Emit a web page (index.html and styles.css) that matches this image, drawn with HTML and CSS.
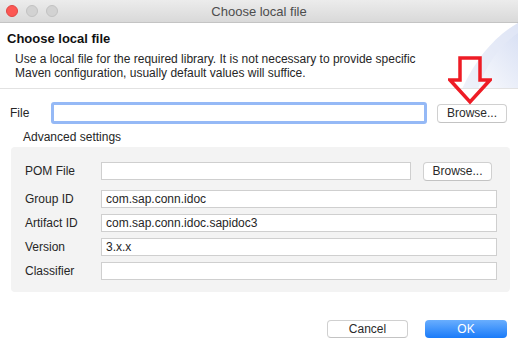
FILE: index.html
```html
<!DOCTYPE html>
<html>
<head>
<meta charset="utf-8">
<link rel="stylesheet" href="styles.css">
</head>
<body>
<div class="window">
  <div class="titlebar">
    <div class="lights">
      <span class="light red"></span>
      <span class="light"></span>
      <span class="light"></span>
    </div>
    <div class="title">Choose local file</div>
  </div>
  <div class="header">
    <svg class="deco" width="60" height="66" viewBox="0 0 60 66">
      <defs>
        <linearGradient id="g" x1="0" y1="1" x2="1" y2="0">
          <stop offset="0" stop-color="#ffffff"/>
          <stop offset="1" stop-color="#d6def3"/>
        </linearGradient>
      </defs>
      <path d="M60 0 L60 66 L4 66 C18 36 36 14 60 0 Z" fill="url(#g)"/>
      <path d="M60 10 C46 20 30 36 20 66 L4 66 C18 36 36 14 60 0 Z" fill="#e4eaf7" opacity="0.6"/>
    </svg>
    <h1 class="heading">Choose local file</h1>
    <p class="desc">Use a local file for the required library. It is not necessary to provide specific<br>Maven configuration, usually default values will suffice.</p>
  </div>
  <div class="content">
    <div class="file-row">
      <label class="file-label">File</label>
      <div class="input focus"></div>
      <button class="btn browse-main">Browse...</button>
    </div>
    <div class="adv-title">Advanced settings</div>
    <div class="group">
      <div class="row">
        <label class="lbl">POM File</label>
        <div class="input pom"></div>
        <button class="btn browse-pom">Browse...</button>
      </div>
      <div class="row">
        <label class="lbl">Group ID</label>
        <div class="input wide">com.sap.conn.idoc</div>
      </div>
      <div class="row">
        <label class="lbl">Artifact ID</label>
        <div class="input wide">com.sap.conn.idoc.sapidoc3</div>
      </div>
      <div class="row">
        <label class="lbl">Version</label>
        <div class="input wide">3.x.x</div>
      </div>
      <div class="row">
        <label class="lbl">Classifier</label>
        <div class="input wide"></div>
      </div>
    </div>
  </div>
  <div class="footer">
    <button class="btn cancel">Cancel</button>
    <button class="btn ok">OK</button>
  </div>
  <svg class="arrow" width="44" height="50" viewBox="0 0 44 50">
    <path d="M9 2 L29 2 L29 24 L39 24 L19 46 L-1 24 L9 24 Z" transform="translate(3,1)" fill="none" stroke="#ee1c25" stroke-width="3.5" stroke-linejoin="miter"/>
  </svg>
</div>
</body>
</html>
```
FILE: styles.css
```css
* { box-sizing: border-box; }
html, body { margin: 0; padding: 0; }
body {
  width: 518px;
  height: 350px;
  background: #fff;
  font-family: "Liberation Sans", Arial, sans-serif;
  font-size: 12px;
  color: #262626;
  overflow: hidden;
}
.window {
  position: relative;
  width: 518px;
  height: 350px;
}
.titlebar {
  height: 23px;
  background: linear-gradient(#ececec, #d9d9d9);
  border-bottom: 1px solid #c4c4c4;
  display: flex;
  align-items: center;
  position: relative;
}
.lights {
  display: flex;
  gap: 8px;
  padding-left: 6px;
}
.light {
  width: 12px;
  height: 12px;
  border-radius: 50%;
  background: #d2d2d2;
  border: 1px solid #c2c2c2;
}
.light.red {
  background: #fc5753;
  border-color: #df4744;
}
.title {
  flex: 1;
  text-align: center;
  font-size: 13px;
  color: #4d4d4d;
  margin-right: 58px;
}
.header {
  position: relative;
  height: 66px;
  border-bottom: 1px solid #e2e2e2;
  padding: 8px 7px 0;
  overflow: hidden;
}
.deco {
  position: absolute;
  right: 0;
  top: 0;
}
.heading {
  position: relative;
  margin: 0;
  font-size: 13px;
  font-weight: bold;
  color: #111;
}
.desc {
  position: relative;
  margin: 6px 0 0 8px;
  line-height: 14px;
  color: #262626;
}
.content {
  padding: 13px 8px 0 10px;
}
.file-row {
  display: flex;
  align-items: center;
  height: 22px;
}
.file-label {
  width: 41px;
}
.input {
  height: 18px;
  background: #fff;
  border: 1px solid #cfcfcf;
  padding: 1px 4px;
  line-height: 15px;
  color: #262626;
}
.input.focus {
  width: 376px;
  height: 22px;
  border: 3px solid #95b9f6;
  border-radius: 3px;
}
.btn {
  font-family: "Liberation Sans", Arial, sans-serif;
  font-size: 12px;
  color: #2a2a2a;
  background: #fff;
  border: 1px solid #d0d0d0;
  border-bottom-color: #c3c3c3;
  border-radius: 4px;
  height: 19px;
  padding: 0;
  line-height: 16px;
}
.browse-main {
  width: 70px;
  margin-left: 10px;
}
.adv-title {
  margin: 3px 0 0 13px;
  height: 20px;
  line-height: 20px;
  color: #262626;
}
.group {
  margin: 0 0 0 1px;
  width: 499px;
  height: 145px;
  background: #f3f3f3;
  border-radius: 4px;
  padding: 15px 13px 0 14px;
  display: flex;
  flex-direction: column;
  gap: 6px;
}
.row {
  display: flex;
  align-items: center;
  height: 18px;
}
.lbl {
  width: 76px;
}
.input.pom {
  width: 310px;
}
.browse-pom {
  width: 69px;
  margin-left: 12px;
}
.input.wide {
  width: 396px;
}
.row:first-child {
  margin-bottom: 4px;
}
.footer {
  display: flex;
  justify-content: flex-end;
  gap: 17px;
  padding: 28px 11px 0 0;
}
.cancel {
  width: 81px;
  height: 18px;
}
.ok {
  width: 82px;
  height: 18px;
  color: #fff;
  border: none;
  background: linear-gradient(#69aefe, #1a7bf9);
}
.arrow {
  position: absolute;
  left: 448px;
  top: 55px;
}
```
